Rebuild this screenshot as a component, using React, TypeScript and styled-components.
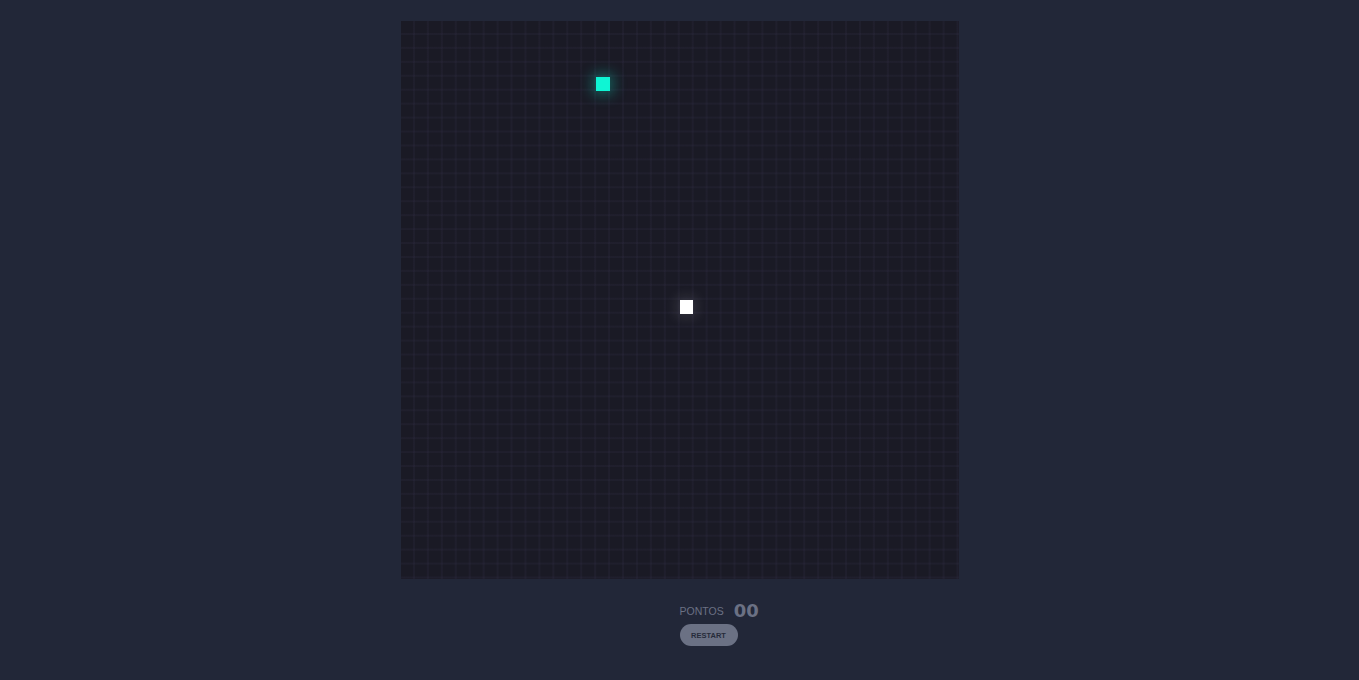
import React from 'react'
import styled, { createGlobalStyle } from 'styled-components'

const CELLS = 40
const BOARD = 558
const CELL = BOARD / CELLS

const GlobalStyle = createGlobalStyle`
  html, body {
    margin: 0;
    padding: 0;
    background: #222738;
    font-family: "Liberation Sans", Arial, sans-serif;
  }
`

const StyledPage = styled.main`
  display: flex;
  flex-direction: column;
  align-items: center;
  padding-top: 21px;
  min-height: 100vh;
  box-sizing: border-box;
`

const StyledBoard = styled.div`
  position: relative;
  width: ${BOARD}px;
  height: ${BOARD}px;
  background-color: #1a1a25;
  background-image:
    linear-gradient(to right, transparent calc(100% - 1.5px), rgba(60, 55, 85, 0.16) calc(100% - 1.5px)),
    linear-gradient(to bottom, transparent calc(100% - 1.5px), rgba(60, 55, 85, 0.16) calc(100% - 1.5px));
  background-size: ${CELL}px ${CELL}px;
`

const StyledCell = styled.div<{ $kind: 'food' | 'snake' }>`
  position: absolute;
  width: ${CELL}px;
  height: ${CELL}px;
  background: ${(p) => (p.$kind === 'food' ? '#0ff5d4' : '#ffffff')};
  box-shadow: ${(p) =>
    p.$kind === 'food'
      ? '0 0 14px 3px rgba(15, 245, 212, 0.35)'
      : '0 0 14px 3px rgba(255, 255, 255, 0.12)'};
`

const StyledInfo = styled.div`
  display: grid;
  grid-template-columns: 1fr 1fr;
  width: ${BOARD}px;
  margin-top: 22px;
`

const StyledInfoColumn = styled.div`
  grid-column: 2;
  display: flex;
  flex-direction: column;
  align-items: flex-start;
  gap: 3px;
`

const StyledScoreRow = styled.div`
  display: flex;
  align-items: center;
  gap: 10px;
`

const StyledLabel = styled.span`
  font-size: 10.5px;
  font-weight: 400;
  color: #6b7184;
`

const StyledScore = styled.span`
  font-size: 18px;
  font-weight: 700;
  line-height: 20px;
  color: #6b7184;
  font-family: "DejaVu Sans", "Liberation Sans", sans-serif;
`

const StyledButton = styled.button`
  width: 58px;
  height: 22px;
  border: none;
  border-radius: 11px;
  background: #6b7184;
  color: #262b3a;
  font-family: "Liberation Sans", Arial, sans-serif;
  font-size: 7.5px;
  font-weight: 700;
  padding: 0;
  cursor: pointer;
`

const food = { x: 14, y: 4 }
const snake = [{ x: 20, y: 20 }]

export default function App() {
  return (
    <>
      <GlobalStyle />
      <StyledPage>
        <StyledBoard>
          <StyledCell $kind="food" style={{ left: food.x * CELL, top: food.y * CELL }} />
          {snake.map((s, i) => (
            <StyledCell key={i} $kind="snake" style={{ left: s.x * CELL, top: s.y * CELL }} />
          ))}
        </StyledBoard>
        <StyledInfo>
          <StyledInfoColumn>
            <StyledScoreRow>
              <StyledLabel>PONTOS</StyledLabel>
              <StyledScore>00</StyledScore>
            </StyledScoreRow>
            <StyledButton>RESTART</StyledButton>
          </StyledInfoColumn>
        </StyledInfo>
      </StyledPage>
    </>
  )
}
